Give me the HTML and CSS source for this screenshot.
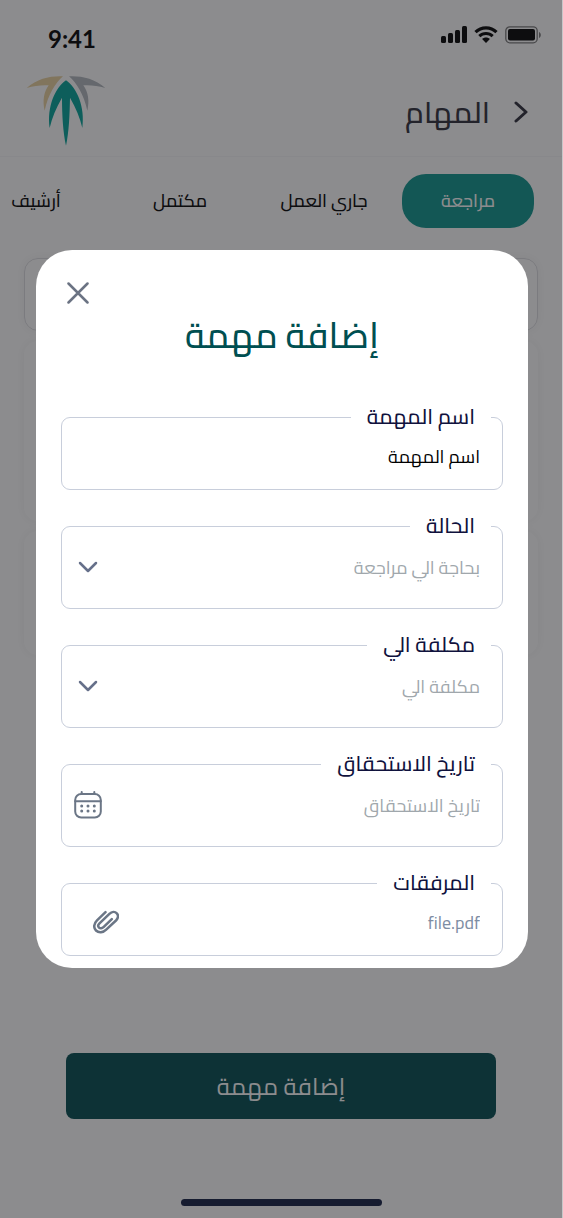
FILE: index.html
```html
<!DOCTYPE html>
<html lang="ar" dir="rtl">
<head>
    <meta charset="UTF-8">
    <meta name="viewport" content="width=device-width, initial-scale=1.0">
    <title>المهام</title>
    <link rel="stylesheet" href="styles.css">
</head>
<body>
    <div class="page">
        <!-- Status bar -->
        <div class="status-bar" dir="ltr">
            <span class="time">9:41</span>
            <div class="status-icons">
                <svg width="26" height="17" viewBox="0 0 26 17">
                    <rect x="0" y="10" width="5" height="7" rx="1.5"/>
                    <rect x="7" y="7" width="5" height="10" rx="1.5"/>
                    <rect x="14" y="4" width="5" height="13" rx="1.5"/>
                    <rect x="21" y="0" width="5" height="17" rx="1.5"/>
                </svg>
                <svg width="24" height="17" viewBox="0 0 24 17">
                    <path d="M1.5 6.2C7.3.4 16.7.4 22.5 6.2" fill="none" stroke="#000" stroke-width="3.2"/>
                    <path d="M5.3 10.1c3.7-3.6 9.7-3.6 13.4 0" fill="none" stroke="#000" stroke-width="3"/>
                    <path d="M12 17l-3.9-3.9c2.2-2 5.6-2 7.8 0z"/>
                </svg>
                <svg width="36" height="18" viewBox="0 0 36 18">
                    <rect x="0.8" y="0.8" width="31.4" height="16" rx="4" fill="none" stroke="#777" stroke-width="1.3"/>
                    <rect x="3" y="3" width="27" height="11.6" rx="2"/>
                    <path d="M34 6v6c2.4-1 2.4-5 0-6z" fill="#777"/>
                </svg>
            </div>
        </div>

        <header class="header">
            <button class="back" type="button" aria-label="رجوع">
                <svg width="14" height="22" viewBox="0 0 14 22"><path d="M2 2l10 9-10 9"/></svg>
            </button>
            <h1>المهام</h1>
            <svg class="logo" width="80" height="71" viewBox="20 30 240 213">
                <path fill="#e8d09c" d="M22 69C55 40 95 32 131 34C107 55 87 88 76 137C69 108 73 82 88 61C65 60 45 62 22 69Z"/>
                <path fill="#b0b6bc" d="M258 69C225 40 185 32 149 34C173 55 193 88 204 137C211 108 207 82 192 61C215 60 235 62 258 69Z"/>
                <path fill="#00a398" d="M140 46C108 68 82 125 91 189C98 158 110 130 128 98C128 150 131 200 140 242C149 200 151 150 152 98C170 130 182 158 189 189C198 125 172 68 140 46Z"/>
            </svg>
        </header>

        <nav class="tabs">
            <a href="#review" class="tab active">مراجعة</a>
            <a href="#progress" class="tab">جاري العمل</a>
            <a href="#done" class="tab">مكتمل</a>
            <a href="#archive" class="tab">أرشيف</a>
        </nav>

        <main class="list">
            <div class="card search"></div>
            <div class="card task"></div>
            <div class="card task small"></div>
        </main>

        <button class="add-button" type="button">إضافة مهمة</button>
        <div class="home-bar"></div>
    </div>

    <!-- Add task dialog -->
    <div class="overlay">
        <form class="modal" role="dialog" aria-labelledby="modalTitle">
            <button class="close" type="button" aria-label="إغلاق">
                <svg width="22" height="22" viewBox="0 0 22 22"><path d="M1.5 1.5l19 19M20.5 1.5l-19 19"/></svg>
            </button>
            <h2 id="modalTitle">إضافة مهمة</h2>

            <fieldset class="field short">
                <legend><label for="taskName">اسم المهمة</label></legend>
                <div class="control">
                    <input type="text" id="taskName" name="taskName" value="اسم المهمة">
                </div>
            </fieldset>

            <fieldset class="field">
                <legend><label for="status">الحالة</label></legend>
                <div class="control">
                    <select id="status" name="status">
                        <option>بحاجة الي مراجعة</option>
                    </select>
                    <svg class="icon chevron" width="20" height="12" viewBox="0 0 20 12"><path d="M2 2l8 8 8-8"/></svg>
                </div>
            </fieldset>

            <fieldset class="field">
                <legend><label for="assignee">مكلفة الي</label></legend>
                <div class="control">
                    <select id="assignee" name="assignee">
                        <option>مكلفة الي</option>
                    </select>
                    <svg class="icon chevron" width="20" height="12" viewBox="0 0 20 12"><path d="M2 2l8 8 8-8"/></svg>
                </div>
            </fieldset>

            <fieldset class="field">
                <legend><label for="dueDate">تاريخ الاستحقاق</label></legend>
                <div class="control">
                    <input type="text" id="dueDate" name="dueDate" placeholder="تاريخ الاستحقاق">
                    <svg class="icon calendar" width="28" height="28" viewBox="0 0 28 28">
                        <rect x="1.2" y="3" width="25.6" height="23.5" rx="6"/>
                        <path d="M1.2 10.2h25.6M7.7 1v2M20.3 1v2"/>
                        <path class="dots" d="M7.7 15h0M14 15h0M20.3 15h0M7.7 20h0M14 20h0M20.3 20h0"/>
                    </svg>
                </div>
            </fieldset>

            <fieldset class="field short">
                <legend><label for="files">المرفقات</label></legend>
                <div class="control">
                    <input type="text" id="files" name="files" class="file" value="file.pdf">
                    <svg class="icon clip" width="26" height="24" viewBox="0 0 26 24">
                        <path d="M12.5 2.2L4 10.3c-3.4 3.3-3.6 7.6-1 10.2c2.7 2.6 7 2.3 10.2-.9L23 10.5c2.4-2.4 2.6-5.4.8-7.2s-5-1.7-7.4.6L6.5 13.3c-1.5 1.5-1.6 3.2-.5 4.3s3 1 4.5-.5l8.3-8"/>
                    </svg>
                </div>
            </fieldset>
        </form>
    </div>
</body>
</html>
```

FILE: styles.css
```css
* {
    box-sizing: border-box;
}

body {
    margin: 0;
    font-family: Cairo, "DejaVu Sans", sans-serif;
    background-color: #c6c6c8;
    color: #000;
}

button, input, select {
    font-family: inherit;
}

.page {
    display: flex;
    flex-direction: column;
    min-height: 100vh;
    margin-right: 1px;
    padding-bottom: 12px;
    overflow: hidden;
    background-color: #fff;
}

.status-bar {
    display: flex;
    justify-content: space-between;
    align-items: flex-start;
    height: 68px;
    padding: 26px 21px 0 48px;
}

.time {
    font-family: Lato, sans-serif;
    font-size: 24px;
    font-weight: bold;
    line-height: 26px;
}

.status-icons {
    display: flex;
    gap: 7px;
}

.header {
    display: flex;
    align-items: center;
    height: 89px;
    padding: 0 34px 0 26px;
    border-bottom: 1px solid #f6f6f8;
}

.header h1 {
    margin: 0 24px 0 0;
    font-size: 30px;
    font-weight: 500;
    color: #2c2c38;
}

.back, .close {
    display: flex;
    padding: 0;
    border: none;
    background: none;
    cursor: pointer;
}

.back svg {
    fill: none;
    stroke: #2c2c38;
    stroke-width: 3;
    stroke-linecap: round;
    stroke-linejoin: round;
}

.logo {
    margin-right: auto;
    margin-bottom: 4px;
}

.tabs {
    display: flex;
    gap: 12px;
    padding: 17px 28px 0 0;
}

.tab {
    flex: 0 0 132px;
    height: 54px;
    border-radius: 24px;
    font-size: 18px;
    font-weight: 500;
    line-height: 54px;
    text-align: center;
    text-decoration: none;
    white-space: nowrap;
    color: #000;
}

.tab.active {
    background-color: #0c948c;
    color: #fff;
}

.list {
    display: flex;
    flex-direction: column;
    gap: 10px;
    padding: 30px 24px;
}

.card {
    border-radius: 14px;
    box-shadow: 0 0 12px rgba(0, 0, 0, 0.06);
}

.search {
    height: 73px;
    border: 1px solid #dcdce0;
}

.task {
    height: 180px;
}

.task.small {
    height: 124px;
}

.add-button {
    height: 66px;
    margin: auto 66px 0;
    border: none;
    border-radius: 8px;
    background-color: #004a4e;
    color: #fff;
    font-size: 24px;
    cursor: pointer;
}

.home-bar {
    width: 201px;
    height: 7px;
    margin: 80px auto 0;
    border-radius: 4px;
    background-color: #121e42;
}

.overlay {
    position: fixed;
    inset: 0 1px 0 0;
    display: flex;
    align-items: center;
    padding: 0 34px 0 36px;
    background-color: rgba(26, 26, 30, 0.5);
}

.modal {
    width: 100%;
    padding: 32px 25px 12px;
    border-radius: 36px;
    background-color: #fff;
}

.close {
    margin: 0 auto 0 6px;
}

.close svg {
    fill: none;
    stroke: #6b7383;
    stroke-width: 2.5;
    stroke-linecap: round;
}

.modal h2 {
    height: 60px;
    margin: 1px 0 34px;
    font-size: 36px;
    font-weight: 500;
    line-height: 60px;
    text-align: center;
    color: #004f51;
}

.field {
    min-width: 0;
    margin: 0 0 18px;
    padding: 0 0 18px;
    border: 1px solid #c8cedb;
    border-radius: 9px;
}

.field.short {
    padding-bottom: 12px;
}

.field:last-child {
    margin-bottom: 0;
}

.field legend {
    height: 36px;
    margin-right: 11px;
    padding: 0 16px;
    font-size: 21px;
    font-weight: 500;
    line-height: 36px;
    color: #10123d;
}

.control {
    display: grid;
    align-items: center;
}

.control input, .control select, .icon {
    grid-area: 1 / 1;
}

.control input, .control select {
    width: 100%;
    height: 46px;
    padding: 0 22px 0 60px;
    border: none;
    outline: none;
    background: none;
    appearance: none;
    font-size: 18px;
    color: #000;
}

.short .control input {
    height: 42px;
}

.control select, .control input::placeholder {
    color: #a0a7ac;
    opacity: 1;
}

.control .file {
    color: #7e8da3;
}

.icon {
    justify-self: end;
    margin-left: 16px;
    fill: none;
    stroke: #66708a;
    stroke-width: 2.5;
    stroke-linecap: round;
    stroke-linejoin: round;
    pointer-events: none;
}

.calendar, .clip {
    stroke: #6b7686;
    stroke-width: 2;
}

.calendar {
    margin-left: 12px;
}

.clip {
    margin-left: 31px;
    stroke-width: 2.5;
}

.dots {
    stroke-width: 3;
}
```
